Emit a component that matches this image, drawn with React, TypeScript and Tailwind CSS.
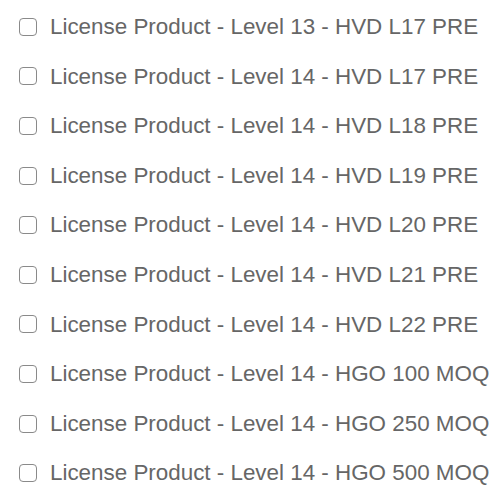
const ITEMS = [
  'License Product - Level 13 - HVD L17 PRE',
  'License Product - Level 14 - HVD L17 PRE',
  'License Product - Level 14 - HVD L18 PRE',
  'License Product - Level 14 - HVD L19 PRE',
  'License Product - Level 14 - HVD L20 PRE',
  'License Product - Level 14 - HVD L21 PRE',
  'License Product - Level 14 - HVD L22 PRE',
  'License Product - Level 14 - HGO 100 MOQ',
  'License Product - Level 14 - HGO 250 MOQ',
  'License Product - Level 14 - HGO 500 MOQ',
];

export default function App() {
  return (
    <div className="w-[502px] h-[502px] bg-white pl-[19px] pt-[2px] [font-family:Liberation_Sans,Arial,sans-serif]">
      {ITEMS.map((label, i) => (
        <label key={i} className="flex items-center h-[49.6px] gap-[13px] text-[22.4px] text-[#666666] cursor-pointer">
          <span className="w-[18px] h-[18px] shrink-0 rounded-[4px] border border-[#8a8a8a] bg-white" />
          <span>{label}</span>
        </label>
      ))}
    </div>
  );
}
